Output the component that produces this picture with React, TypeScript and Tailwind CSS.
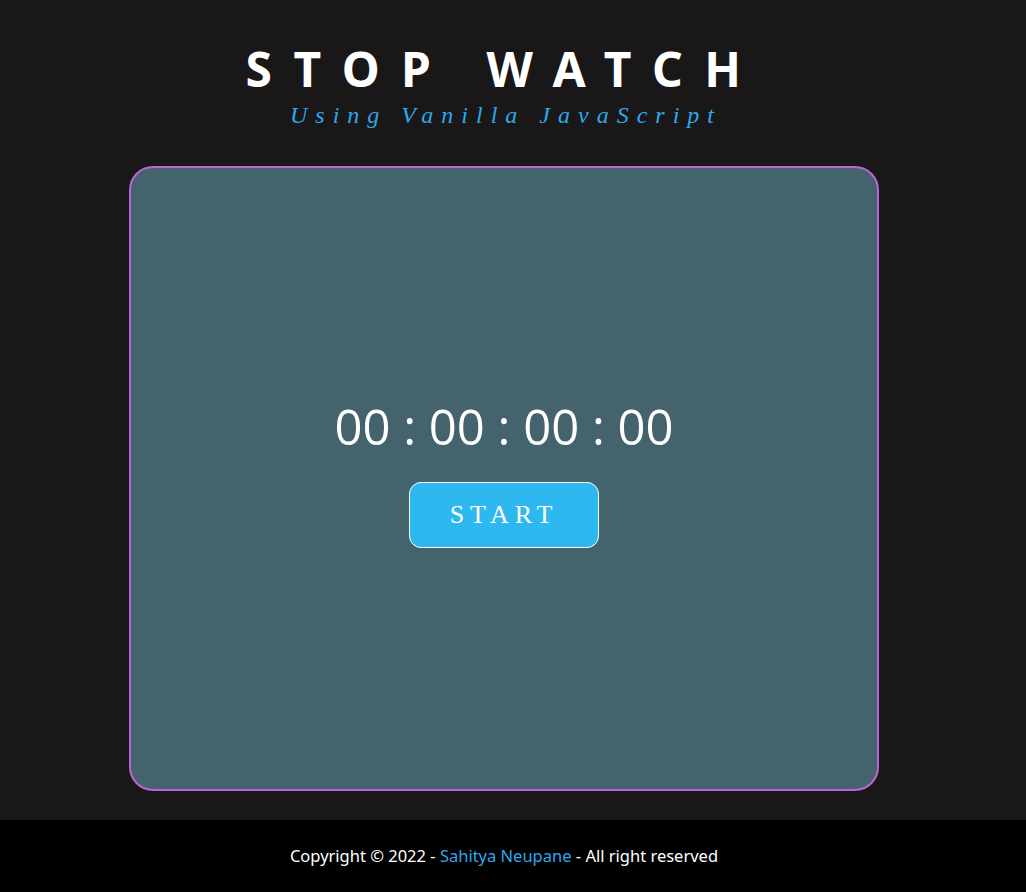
export default function App() {
  return (
    <div className="min-h-screen flex flex-col bg-[#191718]">
      <main className="flex-1 flex flex-col items-center pr-[18px]">
        <h1 className="mt-[45px] text-[48px] leading-[48px] font-bold tracking-[21.5px] text-white font-['Noto_Sans',sans-serif]">
          STOP WATCH
        </h1>
        <p className="mt-[8px] pl-[4px] text-[24px] leading-[28px] italic tracking-[8px] text-[#2ea7ec] font-['Liberation_Serif',serif]">
          Using Vanilla JavaScript
        </p>
        <div className="mt-[37px] w-[750px] h-[625px] rounded-[24px] border-2 border-[#b866d8] bg-[#44636d] flex flex-col items-center justify-center">
          <div className="text-[49px] leading-[56px] text-white font-['Open_Sans',sans-serif]">
            00 : 00 : 00 : 00
          </div>
          <button className="mt-[28px] mb-[12px] w-[190px] h-[66px] rounded-[12px] border border-white bg-[#2db9f0] text-white text-[26px] tracking-[6px] font-['Liberation_Serif',serif]">
            START
          </button>
        </div>
        <div className="h-[29px]" />
      </main>
      <footer className="h-[72px] bg-black flex items-center justify-center pr-[18px] text-[16.5px] text-white font-['Noto_Sans',sans-serif]">
        <span>
          Copyright © 2022 - <span className="text-[#2ea7ec]">Sahitya Neupane</span> - All right reserved
        </span>
      </footer>
    </div>
  );
}
